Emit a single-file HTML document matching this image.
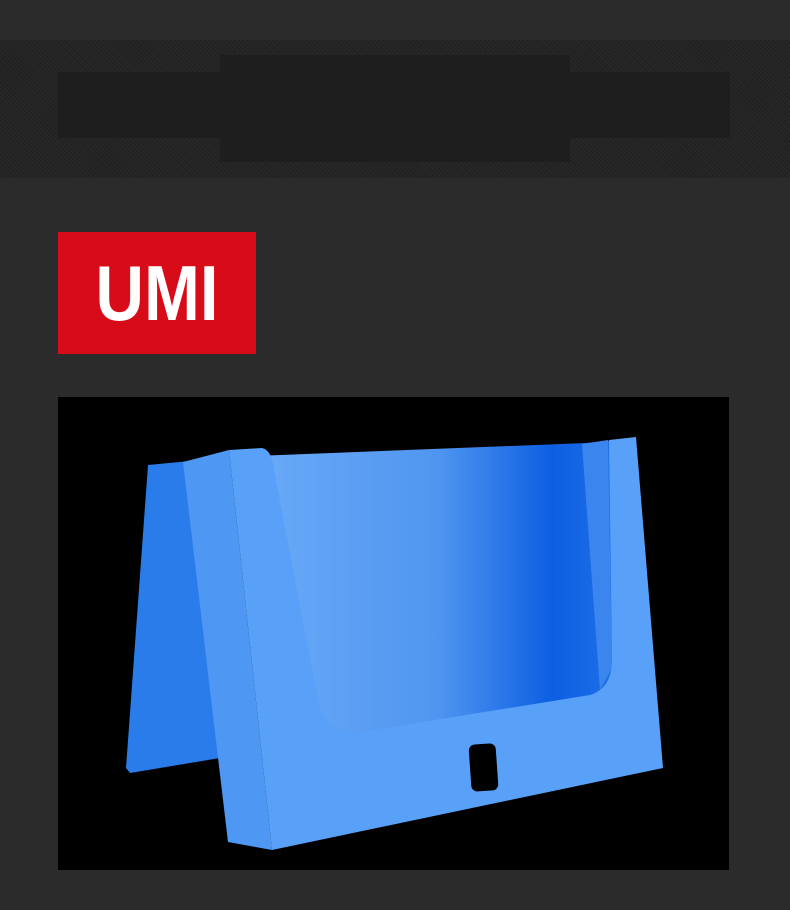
<!DOCTYPE html>
<html><head><meta charset="utf-8"><style>
html,body{margin:0;padding:0;background:#2b2b2b;width:790px;height:910px;overflow:hidden}
.band{position:absolute;left:0;top:40px;width:790px;height:138px;background:#242424;
background-image:repeating-linear-gradient(45deg,rgba(255,255,255,.035) 0 1px,transparent 1px 3px),repeating-linear-gradient(-45deg,rgba(0,0,0,.12) 0 1px,transparent 1px 2px)}
.r1{position:absolute;left:58px;top:72px;width:672px;height:66px;background:#1e1e1e}
.r2{position:absolute;left:220px;top:55px;width:350px;height:107px;background:#1e1e1e}
.logo{position:absolute;left:58px;top:232px;width:198px;height:122px;background:#d80c18}
.logo span{position:absolute;left:0;width:198px;top:0;text-align:center;color:#fff;
font:bold 78px/122px "Liberation Sans",sans-serif;transform:scaleX(.86);transform-origin:center}
.photo{position:absolute;left:58px;top:397px;width:671px;height:473px;background:#000}
</style></head><body>
<div class="band"></div><div class="r1"></div><div class="r2"></div>
<div class="logo"><span>UMI</span></div>
<div class="photo"></div>
<svg style="position:absolute;left:0;top:0" width="790" height="910">
<defs>
<linearGradient id="bk" x1="0" x2="1" y1="0" y2="0">
<stop offset="0" stop-color="#6aaaf8"/><stop offset=".5" stop-color="#5096f0"/><stop offset=".82" stop-color="#0d5fe2"/><stop offset="1" stop-color="#2070e8"/></linearGradient>
</defs>
<polygon points="148,465 190,461 232,756 130,773 126,768" fill="#2b7ceb"/>
<polygon points="255,456 586,443 615,440 618,700 330,745 300,700" fill="url(#bk)"/>
<polygon points="582,444 608,440 612,668 600,690" fill="#3a86ee"/>
<polygon points="183,462 229,450 272,850 228,842" fill="#4e97f2"/>
<path d="M229,450 L262,448 Q272,450 274,470 L318,700 Q326,735 360,732 L590,695 Q612,688 612,660 L609,440 L636,437 L663,768 L272,850 Z" fill="#58a0f8"/>
<rect x="470" y="744" width="27" height="47" rx="6" fill="#000" transform="rotate(-4 483 767)"/>
</svg>
</body></html>
